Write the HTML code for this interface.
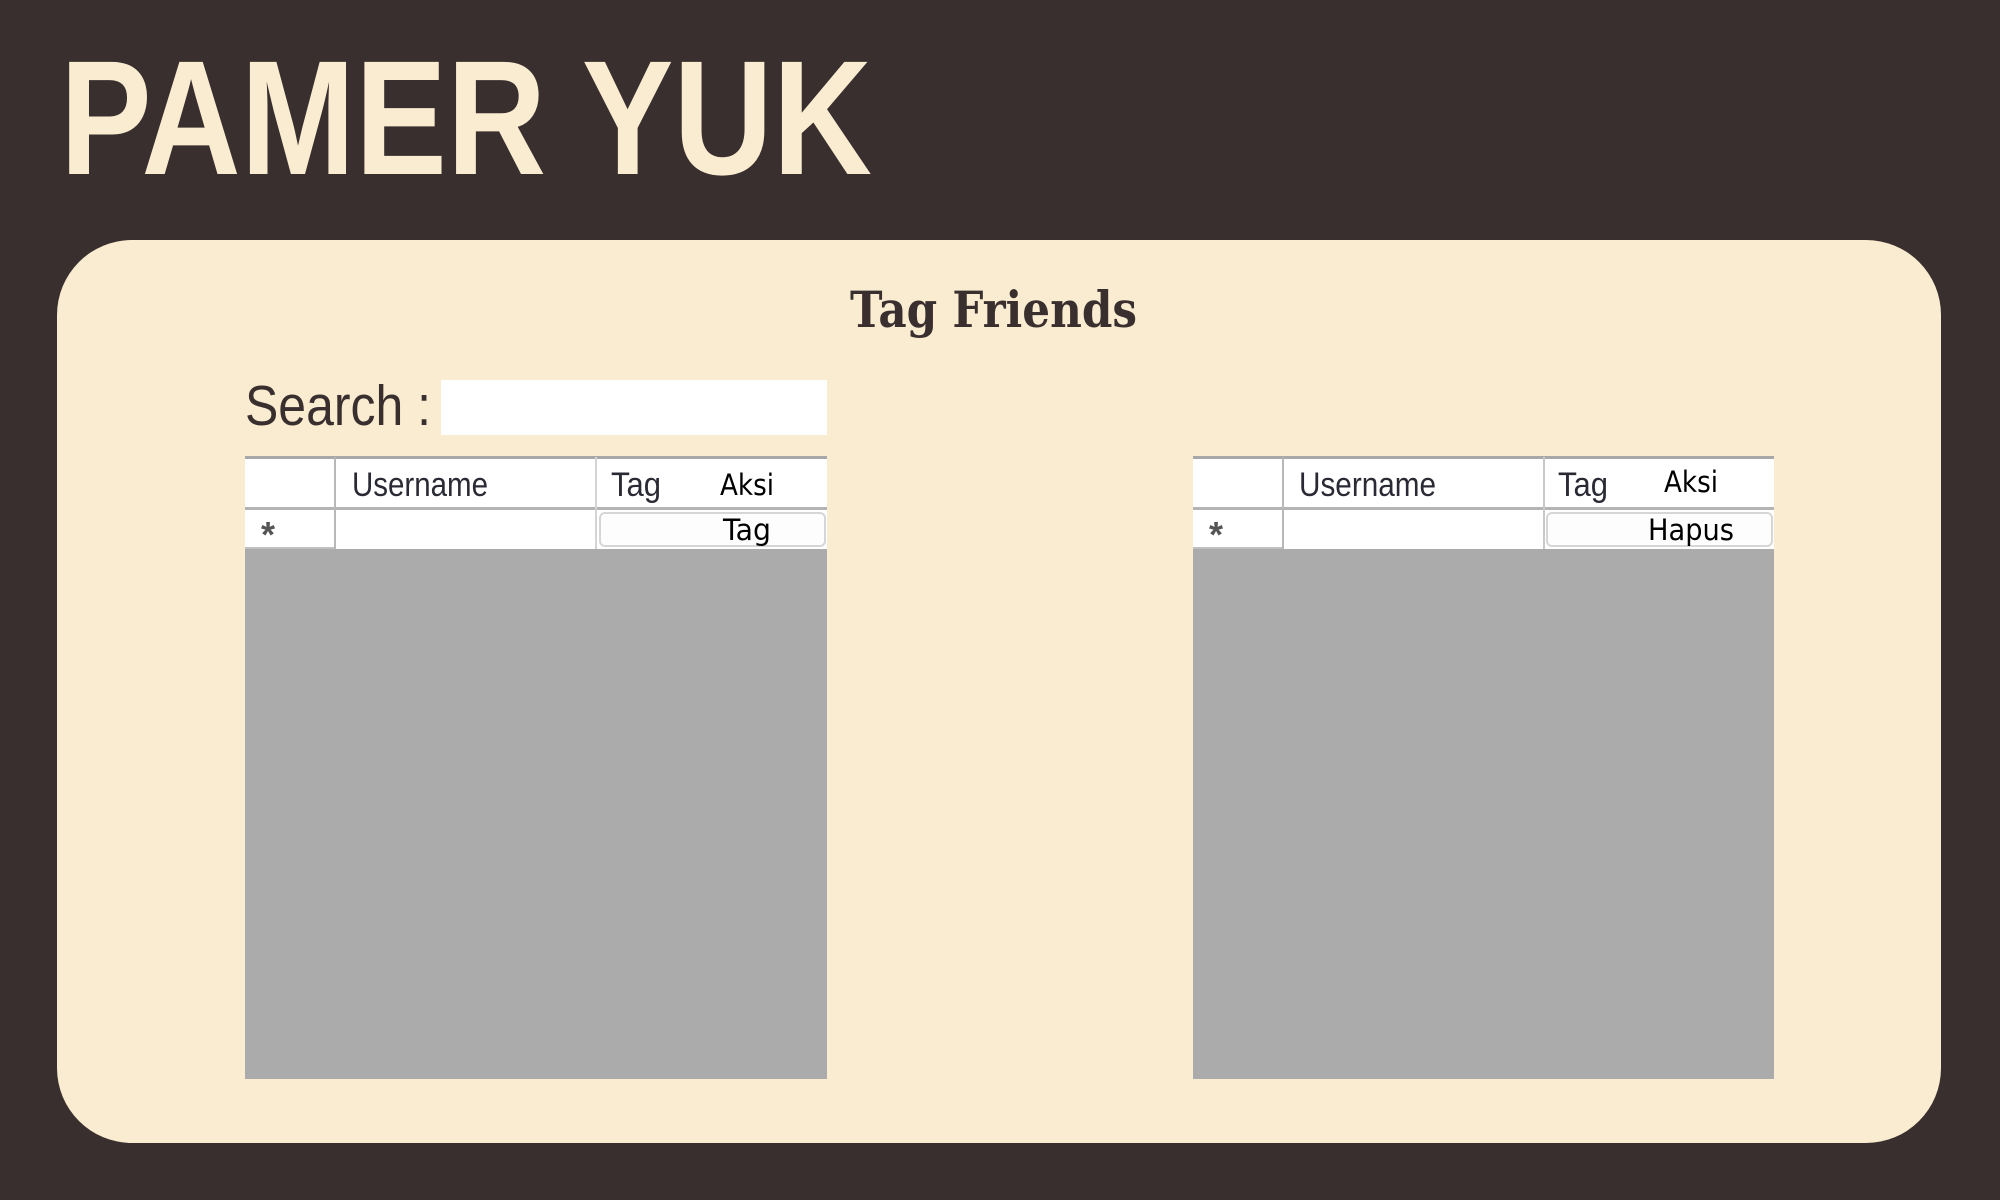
<!DOCTYPE html>
<html><head><meta charset="utf-8"><style>
html,body{margin:0;padding:0;background:#3a2f2f;}
svg{display:block}
</style></head><body>
<svg width="2000" height="1200" viewBox="0 0 2000 1200" xmlns="http://www.w3.org/2000/svg">
<rect width="2000" height="1200" fill="#3a2f2f"/>
<text x="60" y="174" font-family="Liberation Sans, sans-serif" font-weight="bold" font-size="163" fill="#f9ecd0" textLength="812" lengthAdjust="spacingAndGlyphs">PAMER YUK</text>
<rect x="57" y="240" width="1884" height="903" rx="75" ry="75" fill="#f9ecd0"/>
<text x="850" y="327" font-family="DejaVu Serif, Liberation Serif, serif" font-weight="bold" font-size="50" fill="#3a2f2f" textLength="287" lengthAdjust="spacingAndGlyphs">Tag Friends</text>
<text x="245" y="425" font-family="Liberation Sans, sans-serif" font-size="57" fill="#3a2f2f" textLength="186" lengthAdjust="spacingAndGlyphs">Search :</text>
<rect x="441" y="380" width="386" height="55" fill="#fff"/>

<!-- left table -->
<g>
<rect x="245" y="457" width="582" height="92" fill="#fff"/>
<rect x="245" y="549" width="582" height="530" fill="#ababab"/>
<rect x="245" y="456" width="582" height="3" fill="#a8a8a8"/>
<rect x="245" y="507" width="582" height="3" fill="#b4b4b4"/>
<rect x="245" y="547" width="90" height="2" fill="#c0c0c0"/>
<rect x="334" y="457" width="2" height="92" fill="#b8b8b8"/>
<rect x="595" y="457" width="2" height="92" fill="#d4d4d4"/>
<rect x="600" y="513" width="225" height="33" rx="5" fill="#fdfdfd" stroke="#d6d6d6" stroke-width="2"/>
<text x="352" y="496" font-family="Liberation Sans, sans-serif" font-size="34" fill="#2a2a35" textLength="136" lengthAdjust="spacingAndGlyphs">Username</text>
<text x="611" y="496" font-family="Liberation Sans, sans-serif" font-size="34" fill="#2a2a35" textLength="50" lengthAdjust="spacingAndGlyphs">Tag</text>
<text x="720" y="495" font-family="DejaVu Sans, sans-serif" font-size="29" fill="#000" textLength="54" lengthAdjust="spacingAndGlyphs">Aksi</text>
<text x="723" y="540" font-family="DejaVu Sans, sans-serif" font-size="29" fill="#000" textLength="48" lengthAdjust="spacingAndGlyphs">Tag</text>
<text x="261" y="547" font-family="Liberation Sans, sans-serif" font-weight="bold" font-size="36" fill="#555">*</text>
</g>

<!-- right table -->
<g>
<rect x="1193" y="457" width="581" height="92" fill="#fff"/>
<rect x="1193" y="549" width="581" height="530" fill="#ababab"/>
<rect x="1193" y="456" width="581" height="3" fill="#a8a8a8"/>
<rect x="1193" y="507" width="581" height="3" fill="#b4b4b4"/>
<rect x="1193" y="547" width="90" height="2" fill="#c0c0c0"/>
<rect x="1282" y="457" width="2" height="92" fill="#b8b8b8"/>
<rect x="1543" y="457" width="2" height="92" fill="#c8c8c8"/>
<rect x="1547" y="513" width="225" height="33" rx="5" fill="#fdfdfd" stroke="#d6d6d6" stroke-width="2"/>
<text x="1299" y="496" font-family="Liberation Sans, sans-serif" font-size="34" fill="#2a2a35" textLength="137" lengthAdjust="spacingAndGlyphs">Username</text>
<text x="1558" y="496" font-family="Liberation Sans, sans-serif" font-size="34" fill="#2a2a35" textLength="50" lengthAdjust="spacingAndGlyphs">Tag</text>
<text x="1664" y="492" font-family="DejaVu Sans, sans-serif" font-size="29" fill="#000" textLength="54" lengthAdjust="spacingAndGlyphs">Aksi</text>
<text x="1648" y="540" font-family="DejaVu Sans, sans-serif" font-size="29" fill="#000" textLength="86" lengthAdjust="spacingAndGlyphs">Hapus</text>
<text x="1209" y="547" font-family="Liberation Sans, sans-serif" font-weight="bold" font-size="36" fill="#555">*</text>
</g>
</svg>
</body></html>
